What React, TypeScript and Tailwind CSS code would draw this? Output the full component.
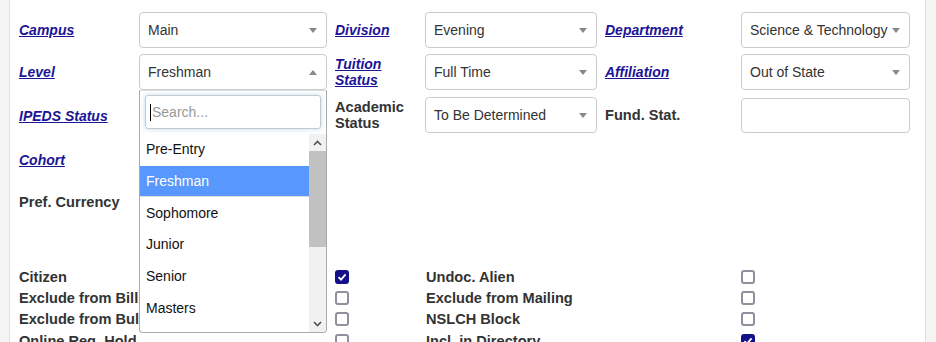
import React from "react";

const F = { fontFamily: '"Liberation Sans", Arial, sans-serif' };

function Arrow({ up = false }: { up?: boolean }) {
  return (
    <svg width="8" height="5" viewBox="0 0 8 5" className="shrink-0">
      {up ? <path d="M0 5 L4 0 L8 5 Z" fill="#888" /> : <path d="M0 0 L8 0 L4 5 Z" fill="#888" />}
    </svg>
  );
}

function Sel({ value, w, h = 36, up = false }: { value: string; w: number; h?: number; up?: boolean }) {
  return (
    <div
      className="flex items-center justify-between border border-[#cccccc] rounded-[4px] bg-white pl-[8px] pr-[9px] text-[14px] text-[#333]"
      style={{ width: w, height: h }}
    >
      <span className="whitespace-nowrap overflow-hidden">{value}</span>
      <Arrow up={up} />
    </div>
  );
}

function LinkLabel({ children }: { children: React.ReactNode }) {
  return <span className="text-[14px] font-bold italic underline text-[#1c1497] leading-[16px]">{children}</span>;
}

function Plain({ children }: { children: React.ReactNode }) {
  return <span className="text-[14.6px] font-bold text-[#333] leading-[16px]">{children}</span>;
}

function Box({ checked = false }: { checked?: boolean }) {
  return checked ? (
    <span className="inline-flex w-[14px] h-[14px] rounded-[3px] bg-[#13108a] items-center justify-center">
      <svg width="10" height="10" viewBox="0 0 10 10">
        <path d="M1.5 5.2 L4 7.6 L8.6 2.4" stroke="white" strokeWidth="1.8" fill="none" />
      </svg>
    </span>
  ) : (
    <span className="inline-block w-[14px] h-[14px] rounded-[3px] border-2 border-[#8f8f9d] bg-white" />
  );
}

export default function App() {
  const checks: [string, boolean, string, boolean][] = [
    ["Citizen", true, "Undoc. Alien", false],
    ["Exclude from Billing", false, "Exclude from Mailing", false],
    ["Exclude from Bulk Mail", false, "NSLCH Block", false],
    ["Online Reg. Hold", false, "Incl. in Directory", true],
  ];
  const items = ["Pre-Entry", "Freshman", "Sophomore", "Junior", "Senior", "Masters"];
  return (
    <div style={F} className="w-[936px] h-[342px] overflow-hidden flex bg-[#f5f5f5]">
      <div className="w-[10px] shrink-0 border-r border-[#e0e0e0] bg-[#f5f5f5]" />
      <div className="relative w-[916px] h-full bg-white border-r border-[#e0e0e0] pl-[9px] pt-[12px]">
        {/* form rows */}
        <div className="flex flex-col">
          <div className="flex items-center h-[36px]">
            <div className="w-[120px]"><LinkLabel>Campus</LinkLabel></div>
            <Sel value="Main" w={188} />
            <div className="w-[90px] ml-[8px]"><LinkLabel>Division</LinkLabel></div>
            <Sel value="Evening" w={172} />
            <div className="w-[136px] ml-[8px]"><LinkLabel>Department</LinkLabel></div>
            <Sel value="Science & Technology" w={169} />
          </div>
          <div className="flex items-center h-[36px] mt-[6px]">
            <div className="w-[120px]"><LinkLabel>Level</LinkLabel></div>
            <Sel value="Freshman" w={188} up />
            <div className="w-[90px] ml-[8px] flex flex-col"><LinkLabel>Tuition</LinkLabel><LinkLabel>Status</LinkLabel></div>
            <Sel value="Full Time" w={172} />
            <div className="w-[136px] ml-[8px]"><LinkLabel>Affiliation</LinkLabel></div>
            <Sel value="Out of State" w={169} />
          </div>
          <div className="flex items-center h-[36px] mt-[7px]">
            <div className="w-[120px] pt-[2px]"><LinkLabel>IPEDS Status</LinkLabel></div>
            <div className="w-[188px]" />
            <div className="w-[90px] ml-[8px] flex flex-col"><Plain>Academic</Plain><Plain>Status</Plain></div>
            <Sel value="To Be Determined" w={172} />
            <div className="w-[136px] ml-[8px]"><Plain>Fund. Stat.</Plain></div>
            <div className="w-[169px] h-[35px] border border-[#cccccc] rounded-[4px]" />
          </div>
          <div className="flex items-center h-[36px] mt-[9px]">
            <LinkLabel>Cohort</LinkLabel>
          </div>
          <div className="mt-[12px]">
            <Plain>Pref. Currency</Plain>
          </div>
        </div>
        {/* checkbox rows */}
        <div className="absolute left-[9px] top-[266px] flex flex-col">
          {checks.map(([a, ca, b, cb]) => (
            <div key={a} className="flex items-center h-[21.4px]">
              <div className="w-[316px] whitespace-nowrap"><Plain>{a}</Plain></div>
              <Box checked={ca} />
              <div className="w-[77px]" />
              <div className="w-[315px] whitespace-nowrap"><Plain>{b}</Plain></div>
              <Box checked={cb} />
            </div>
          ))}
        </div>
        {/* dropdown overlay */}
        <div className="absolute left-[129px] top-[90px] w-[188px] h-[243px] bg-white border border-[#aaaaaa] border-t-[#dddddd] rounded-b-[4px] flex flex-col overflow-hidden">
          <div className="px-[5px] pt-[4px] pb-[5px]">
            <div className="h-[34px] border border-[#c8c8c8] rounded-[3px] shadow-[0_0_5px_rgba(102,175,233,0.45)] flex items-center pl-[4px] text-[14px] text-[#999]">
              <span className="w-[1px] h-[17px] bg-[#000] mr-[1px]" />
              <span>Search...</span>
            </div>
          </div>
          <div className="flex flex-1 min-h-0">
            <div className="flex-1 flex flex-col">
              {items.map((it) => (
                <div
                  key={it}
                  className={
                    "h-[31.7px] shrink-0 flex items-center pl-[6px] text-[14px] " +
                    (it === "Freshman" ? "bg-[#5897fb] text-white border-b border-[#dddddd]" : "text-[#111]")
                  }
                >
                  {it}
                </div>
              ))}
            </div>
            <div className="w-[17px] bg-[#f1f1f1] flex flex-col">
              <div className="h-[17px] flex items-center justify-center">
                <svg width="9" height="6" viewBox="0 0 9 6"><path d="M1 5 L4.5 1.5 L8 5" stroke="#505050" strokeWidth="1.6" fill="none" /></svg>
              </div>
              <div className="h-[96px] bg-[#c1c1c1]" />
              <div className="flex-1" />
              <div className="h-[17px] flex items-center justify-center">
                <svg width="9" height="6" viewBox="0 0 9 6"><path d="M1 1 L4.5 4.5 L8 1" stroke="#505050" strokeWidth="1.6" fill="none" /></svg>
              </div>
            </div>
          </div>
        </div>
      </div>
    </div>
  );
}
